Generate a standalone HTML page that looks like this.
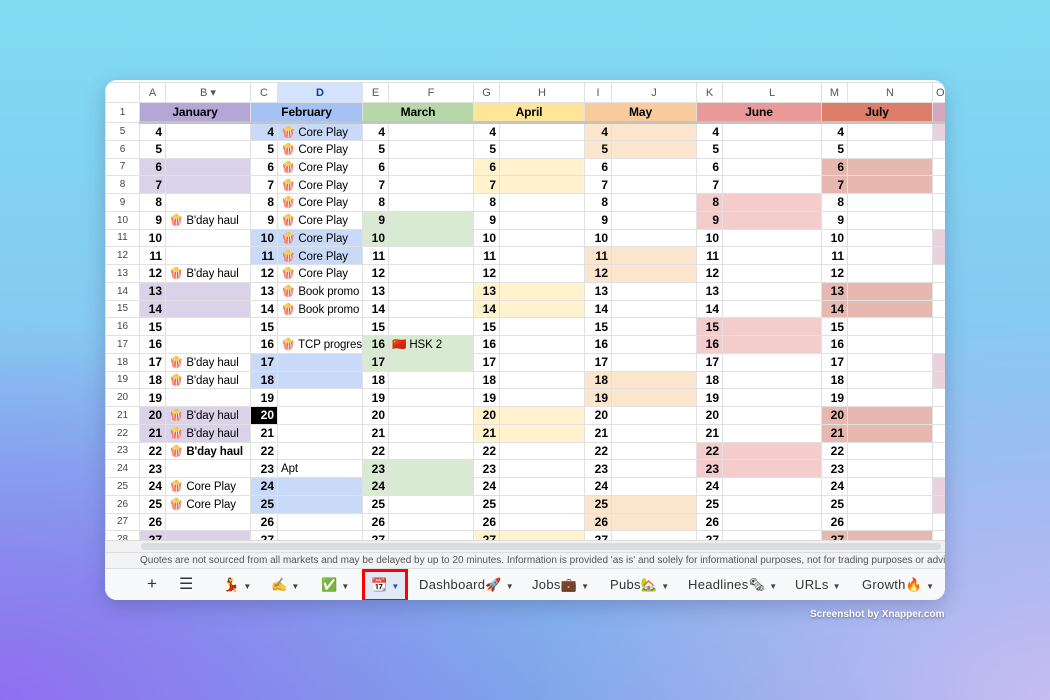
<!DOCTYPE html>
<html><head><meta charset="utf-8"><style>
*{margin:0;padding:0;box-sizing:border-box}
body{width:1050px;height:700px;overflow:hidden;font-family:"Liberation Sans",Arial,sans-serif;
background:radial-gradient(ellipse 560px 380px at 0% 100%,#8f6ff0 0%,rgba(143,111,240,0) 100%),
radial-gradient(ellipse 520px 380px at 100% 100%,#c7bdf3 0%,rgba(199,189,243,0) 100%),
linear-gradient(180deg,#7fdcf3 0%,#86c8f0 50%,#7ea6ea 100%);position:relative}
.card{position:absolute;left:105px;top:80px;width:840px;height:520px;background:#fff;border-radius:12px;overflow:hidden;box-shadow:0 6px 20px rgba(40,40,90,.25)}
table{border-collapse:collapse;table-layout:fixed;position:absolute;left:0;top:2px;width:840px}
td,th{border:1px solid #e1e1e1;height:17.75px;font-size:12px;white-space:nowrap;overflow:hidden;padding:0 3px;color:#000}
td:not(.n){font-size:11.5px;letter-spacing:-.1px}
th{font-weight:normal;font-size:10px;color:#444;text-align:center;background:#fff}
tr.ch th{height:20px;font-size:11px;color:#555}
tr.ch th.sel{background:#d3e3fd;color:#0b3f91;font-weight:bold}
tr.mh td{height:20px;font-weight:bold;text-align:center;font-size:12px;border-bottom:3px solid #c4c4c4}
.n{text-align:right;font-weight:bold}
.j{background:#d9d2e9}.f{background:#c9daf8}.m{background:#d9ead3}.a{background:#fff2cc}.y{background:#fce5cd}.u{background:#f4cccc}.l{background:#e6b8af}.o{background:#ead1dc}
.blk{background:#000;color:#fff}
td.b{font-weight:bold}
.scroll{position:absolute;left:0;top:460px;width:840px;height:12px;background:#f1f1f1;border-top:1px solid #ddd}
.scroll div{position:absolute;left:36px;top:2px;width:800px;height:7px;background:#dadce0;border-radius:4px}
.note{position:absolute;left:0;top:472px;width:840px;height:17px;background:#f1f3f4;border-top:1px solid #ddd;border-bottom:1px solid #ddd;font-size:10px;color:#555;line-height:16px;padding-left:35px;white-space:nowrap}
.note span{color:#1a57d6}
.tabs{position:absolute;left:0;top:489px;width:840px;height:31px;background:#f8f9fa;font-size:13px;color:#333}
.tabs span{position:absolute;top:8px;white-space:nowrap;letter-spacing:.3px}
.ar{font-size:8px;color:#444}
.hl{position:absolute;left:257px;top:0;width:46px;height:33px;border:3px solid #f00;background:#e1e9f7}
.wm{position:absolute;left:810px;top:609px;font-size:10px;color:#fff;font-weight:bold;text-shadow:0 1px 2px rgba(0,0,0,.4)}
</style></head><body>
<div class="card">
<table>
<colgroup><col style="width:34px"><col style="width:26px"><col style="width:85px"><col style="width:27px"><col style="width:85px"><col style="width:26px"><col style="width:85px"><col style="width:26px"><col style="width:85px"><col style="width:27px"><col style="width:85px"><col style="width:26px"><col style="width:99px"><col style="width:26px"><col style="width:85px"><col style="width:13px"></colgroup>
<tr class="ch"><th></th><th>A</th><th>B ▾</th><th>C</th><th class="sel">D</th><th>E</th><th>F</th><th>G</th><th>H</th><th>I</th><th>J</th><th>K</th><th>L</th><th>M</th><th>N</th><th>O</th></tr>
<tr class="mh"><th>1</th><td colspan="2" style="background:#b4a7d6">January</td><td colspan="2" style="background:#a4c2f4">February</td><td colspan="2" style="background:#b6d7a8">March</td><td colspan="2" style="background:#ffe599">April</td><td colspan="2" style="background:#f9cb9c">May</td><td colspan="2" style="background:#ea9999">June</td><td colspan="2" style="background:#dd7e6b">July</td><td style="background:#d5a6bd"></td></tr>
<tr><th>5</th><td class="n">4</td><td></td><td class="n f">4</td><td class="f">🍿 Core Play</td><td class="n">4</td><td></td><td class="n">4</td><td></td><td class="n y">4</td><td class="y"></td><td class="n">4</td><td></td><td class="n">4</td><td></td><td class="o"></td></tr>
<tr><th>6</th><td class="n">5</td><td></td><td class="n">5</td><td>🍿 Core Play</td><td class="n">5</td><td></td><td class="n">5</td><td></td><td class="n y">5</td><td class="y"></td><td class="n">5</td><td></td><td class="n">5</td><td></td><td></td></tr>
<tr><th>7</th><td class="n j">6</td><td class="j"></td><td class="n">6</td><td>🍿 Core Play</td><td class="n">6</td><td></td><td class="n a">6</td><td class="a"></td><td class="n">6</td><td></td><td class="n">6</td><td></td><td class="n l">6</td><td class="l"></td><td></td></tr>
<tr><th>8</th><td class="n j">7</td><td class="j"></td><td class="n">7</td><td>🍿 Core Play</td><td class="n">7</td><td></td><td class="n a">7</td><td class="a"></td><td class="n">7</td><td></td><td class="n">7</td><td></td><td class="n l">7</td><td class="l"></td><td></td></tr>
<tr><th>9</th><td class="n">8</td><td></td><td class="n">8</td><td>🍿 Core Play</td><td class="n">8</td><td></td><td class="n">8</td><td></td><td class="n">8</td><td></td><td class="n u">8</td><td class="u"></td><td class="n">8</td><td></td><td></td></tr>
<tr><th>10</th><td class="n">9</td><td>🍿 B'day haul</td><td class="n">9</td><td>🍿 Core Play</td><td class="n m">9</td><td class="m"></td><td class="n">9</td><td></td><td class="n">9</td><td></td><td class="n u">9</td><td class="u"></td><td class="n">9</td><td></td><td></td></tr>
<tr><th>11</th><td class="n">10</td><td></td><td class="n f">10</td><td class="f">🍿 Core Play</td><td class="n m">10</td><td class="m"></td><td class="n">10</td><td></td><td class="n">10</td><td></td><td class="n">10</td><td></td><td class="n">10</td><td></td><td class="o"></td></tr>
<tr><th>12</th><td class="n">11</td><td></td><td class="n f">11</td><td class="f">🍿 Core Play</td><td class="n">11</td><td></td><td class="n">11</td><td></td><td class="n y">11</td><td class="y"></td><td class="n">11</td><td></td><td class="n">11</td><td></td><td class="o"></td></tr>
<tr><th>13</th><td class="n">12</td><td>🍿 B'day haul</td><td class="n">12</td><td>🍿 Core Play</td><td class="n">12</td><td></td><td class="n">12</td><td></td><td class="n y">12</td><td class="y"></td><td class="n">12</td><td></td><td class="n">12</td><td></td><td></td></tr>
<tr><th>14</th><td class="n j">13</td><td class="j"></td><td class="n">13</td><td>🍿 Book promo</td><td class="n">13</td><td></td><td class="n a">13</td><td class="a"></td><td class="n">13</td><td></td><td class="n">13</td><td></td><td class="n l">13</td><td class="l"></td><td></td></tr>
<tr><th>15</th><td class="n j">14</td><td class="j"></td><td class="n">14</td><td>🍿 Book promo</td><td class="n">14</td><td></td><td class="n a">14</td><td class="a"></td><td class="n">14</td><td></td><td class="n">14</td><td></td><td class="n l">14</td><td class="l"></td><td></td></tr>
<tr><th>16</th><td class="n">15</td><td></td><td class="n">15</td><td></td><td class="n">15</td><td></td><td class="n">15</td><td></td><td class="n">15</td><td></td><td class="n u">15</td><td class="u"></td><td class="n">15</td><td></td><td></td></tr>
<tr><th>17</th><td class="n">16</td><td></td><td class="n">16</td><td>🍿 TCP progress</td><td class="n m">16</td><td class="m">🇨🇳 HSK 2</td><td class="n">16</td><td></td><td class="n">16</td><td></td><td class="n u">16</td><td class="u"></td><td class="n">16</td><td></td><td></td></tr>
<tr><th>18</th><td class="n">17</td><td>🍿 B'day haul</td><td class="n f">17</td><td class="f"></td><td class="n m">17</td><td class="m"></td><td class="n">17</td><td></td><td class="n">17</td><td></td><td class="n">17</td><td></td><td class="n">17</td><td></td><td class="o"></td></tr>
<tr><th>19</th><td class="n">18</td><td>🍿 B'day haul</td><td class="n f">18</td><td class="f"></td><td class="n">18</td><td></td><td class="n">18</td><td></td><td class="n y">18</td><td class="y"></td><td class="n">18</td><td></td><td class="n">18</td><td></td><td class="o"></td></tr>
<tr><th>20</th><td class="n">19</td><td></td><td class="n">19</td><td></td><td class="n">19</td><td></td><td class="n">19</td><td></td><td class="n y">19</td><td class="y"></td><td class="n">19</td><td></td><td class="n">19</td><td></td><td></td></tr>
<tr><th>21</th><td class="n j">20</td><td class="j">🍿 B'day haul</td><td class="n blk">20</td><td></td><td class="n">20</td><td></td><td class="n a">20</td><td class="a"></td><td class="n">20</td><td></td><td class="n">20</td><td></td><td class="n l">20</td><td class="l"></td><td></td></tr>
<tr><th>22</th><td class="n j">21</td><td class="j">🍿 B'day haul</td><td class="n">21</td><td></td><td class="n">21</td><td></td><td class="n a">21</td><td class="a"></td><td class="n">21</td><td></td><td class="n">21</td><td></td><td class="n l">21</td><td class="l"></td><td></td></tr>
<tr><th>23</th><td class="n">22</td><td class="b">🍿 B'day haul</td><td class="n">22</td><td></td><td class="n">22</td><td></td><td class="n">22</td><td></td><td class="n">22</td><td></td><td class="n u">22</td><td class="u"></td><td class="n">22</td><td></td><td></td></tr>
<tr><th>24</th><td class="n">23</td><td></td><td class="n">23</td><td>Apt</td><td class="n m">23</td><td class="m"></td><td class="n">23</td><td></td><td class="n">23</td><td></td><td class="n u">23</td><td class="u"></td><td class="n">23</td><td></td><td></td></tr>
<tr><th>25</th><td class="n">24</td><td>🍿 Core Play</td><td class="n f">24</td><td class="f"></td><td class="n m">24</td><td class="m"></td><td class="n">24</td><td></td><td class="n">24</td><td></td><td class="n">24</td><td></td><td class="n">24</td><td></td><td class="o"></td></tr>
<tr><th>26</th><td class="n">25</td><td>🍿 Core Play</td><td class="n f">25</td><td class="f"></td><td class="n">25</td><td></td><td class="n">25</td><td></td><td class="n y">25</td><td class="y"></td><td class="n">25</td><td></td><td class="n">25</td><td></td><td class="o"></td></tr>
<tr><th>27</th><td class="n">26</td><td></td><td class="n">26</td><td></td><td class="n">26</td><td></td><td class="n">26</td><td></td><td class="n y">26</td><td class="y"></td><td class="n">26</td><td></td><td class="n">26</td><td></td><td></td></tr>
<tr><th>28</th><td class="n j">27</td><td class="j"></td><td class="n">27</td><td></td><td class="n">27</td><td></td><td class="n a">27</td><td class="a"></td><td class="n">27</td><td></td><td class="n">27</td><td></td><td class="n l">27</td><td class="l"></td><td></td></tr>
</table>
<div class="scroll"><div></div></div>
<div class="note">Quotes are not sourced from all markets and may be delayed by up to 20 minutes. Information is provided 'as is' and solely for informational purposes, not for trading purposes or advice. <span>Disclaimer</span></div>
<div class="tabs">
<div class="hl"></div>
<span style="left:42px;font-size:17px;top:5px">+</span>
<span style="left:74px;font-size:16px;top:5px">☰</span>
<span style="left:118px">💃 <b class="ar">▼</b></span>
<span style="left:166px">✍️ <b class="ar">▼</b></span>
<span style="left:216px">✅ <b class="ar">▼</b></span>
<span style="left:266px">📆 <b class="ar" style="color:#1a57d6">▼</b></span>
<span style="left:314px">Dashboard🚀 <b class="ar">▼</b></span>
<span style="left:427px">Jobs💼 <b class="ar">▼</b></span>
<span style="left:505px">Pubs🏡 <b class="ar">▼</b></span>
<span style="left:583px">Headlines🗞 <b class="ar">▼</b></span>
<span style="left:690px">URLs <b class="ar">▼</b></span>
<span style="left:757px">Growth🔥 <b class="ar">▼</b></span>
</div>
</div>
<div class="wm">Screenshot by Xnapper.com</div>
</body></html>
